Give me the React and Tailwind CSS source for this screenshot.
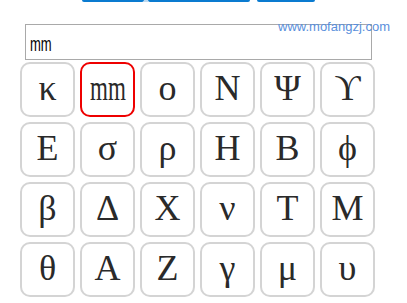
import React from 'react'

const rows = [
  ['κ', 'mm', 'ο', 'Ν', 'Ψ', 'ϒ'],
  ['Ε', 'σ', 'ρ', 'Η', 'Β', 'ϕ'],
  ['β', 'Δ', 'Χ', 'ν', 'Τ', 'Μ'],
  ['θ', 'Α', 'Ζ', 'γ', 'μ', 'υ'],
]

const App = () => {
  const selected = 'mm'

  return (
    <div className="relative w-[407px] h-[303px] overflow-hidden bg-white">
      {/* cut-off toolbar buttons */}
      <div className="flex h-[2px] pl-[82px]">
        <div className="w-[62px] h-[2px] rounded-b-[3px] bg-[#0a7bd0]" />
        <div className="w-[4px] h-[2px] bg-[#bcd9f0]" />
        <div className="w-[102px] h-[2px] rounded-b-[3px] bg-[#0a7bd0]" />
        <div className="w-[7px] h-[2px] bg-white" />
        <div className="w-[58px] h-[2px] rounded-b-[3px] bg-[#0a7bd0]" />
      </div>

      {/* search input */}
      <div className="mt-[22px] ml-[25px] w-[347px] h-[36px] border border-[#a9a9a9] flex items-center pl-[4px] pt-[2px]">
        <span className="inline-block origin-left scale-x-[0.62] text-[21px] leading-none text-black font-['Liberation_Sans',Arial,sans-serif]">
          mm
        </span>
      </div>

      {/* watermark */}
      <div className="absolute left-[278px] top-[19px] text-[13px] leading-[15px] text-[#5a8fdc] font-['Liberation_Sans',Arial,sans-serif]">
        www.mofangzj.com
      </div>

      {/* symbol grid */}
      <div className="mt-[2px] ml-[20px] grid grid-cols-[repeat(6,55px)] gap-[5px]">
        {rows.flat().map((ch, i) => (
          <div
            key={i}
            className={
              ch === selected
                ? 'h-[55px] rounded-[10px] border-2 border-[#ee0000] flex items-center justify-center pb-1'
                : 'h-[55px] rounded-[10px] border-2 border-[#d4d4d4] flex items-center justify-center pb-1'
            }
          >
            {ch === selected ? (
              <span className="inline-block scale-x-[0.64] text-[36px] leading-none text-[#2a2a2a] font-['Liberation_Serif','Times_New_Roman',serif]">
                {ch}
              </span>
            ) : (
              <span className="text-[36px] leading-none text-[#2a2a2a] font-['Liberation_Serif','Times_New_Roman',serif]">
                {ch}
              </span>
            )}
          </div>
        ))}
      </div>
    </div>
  )
}

export default App
